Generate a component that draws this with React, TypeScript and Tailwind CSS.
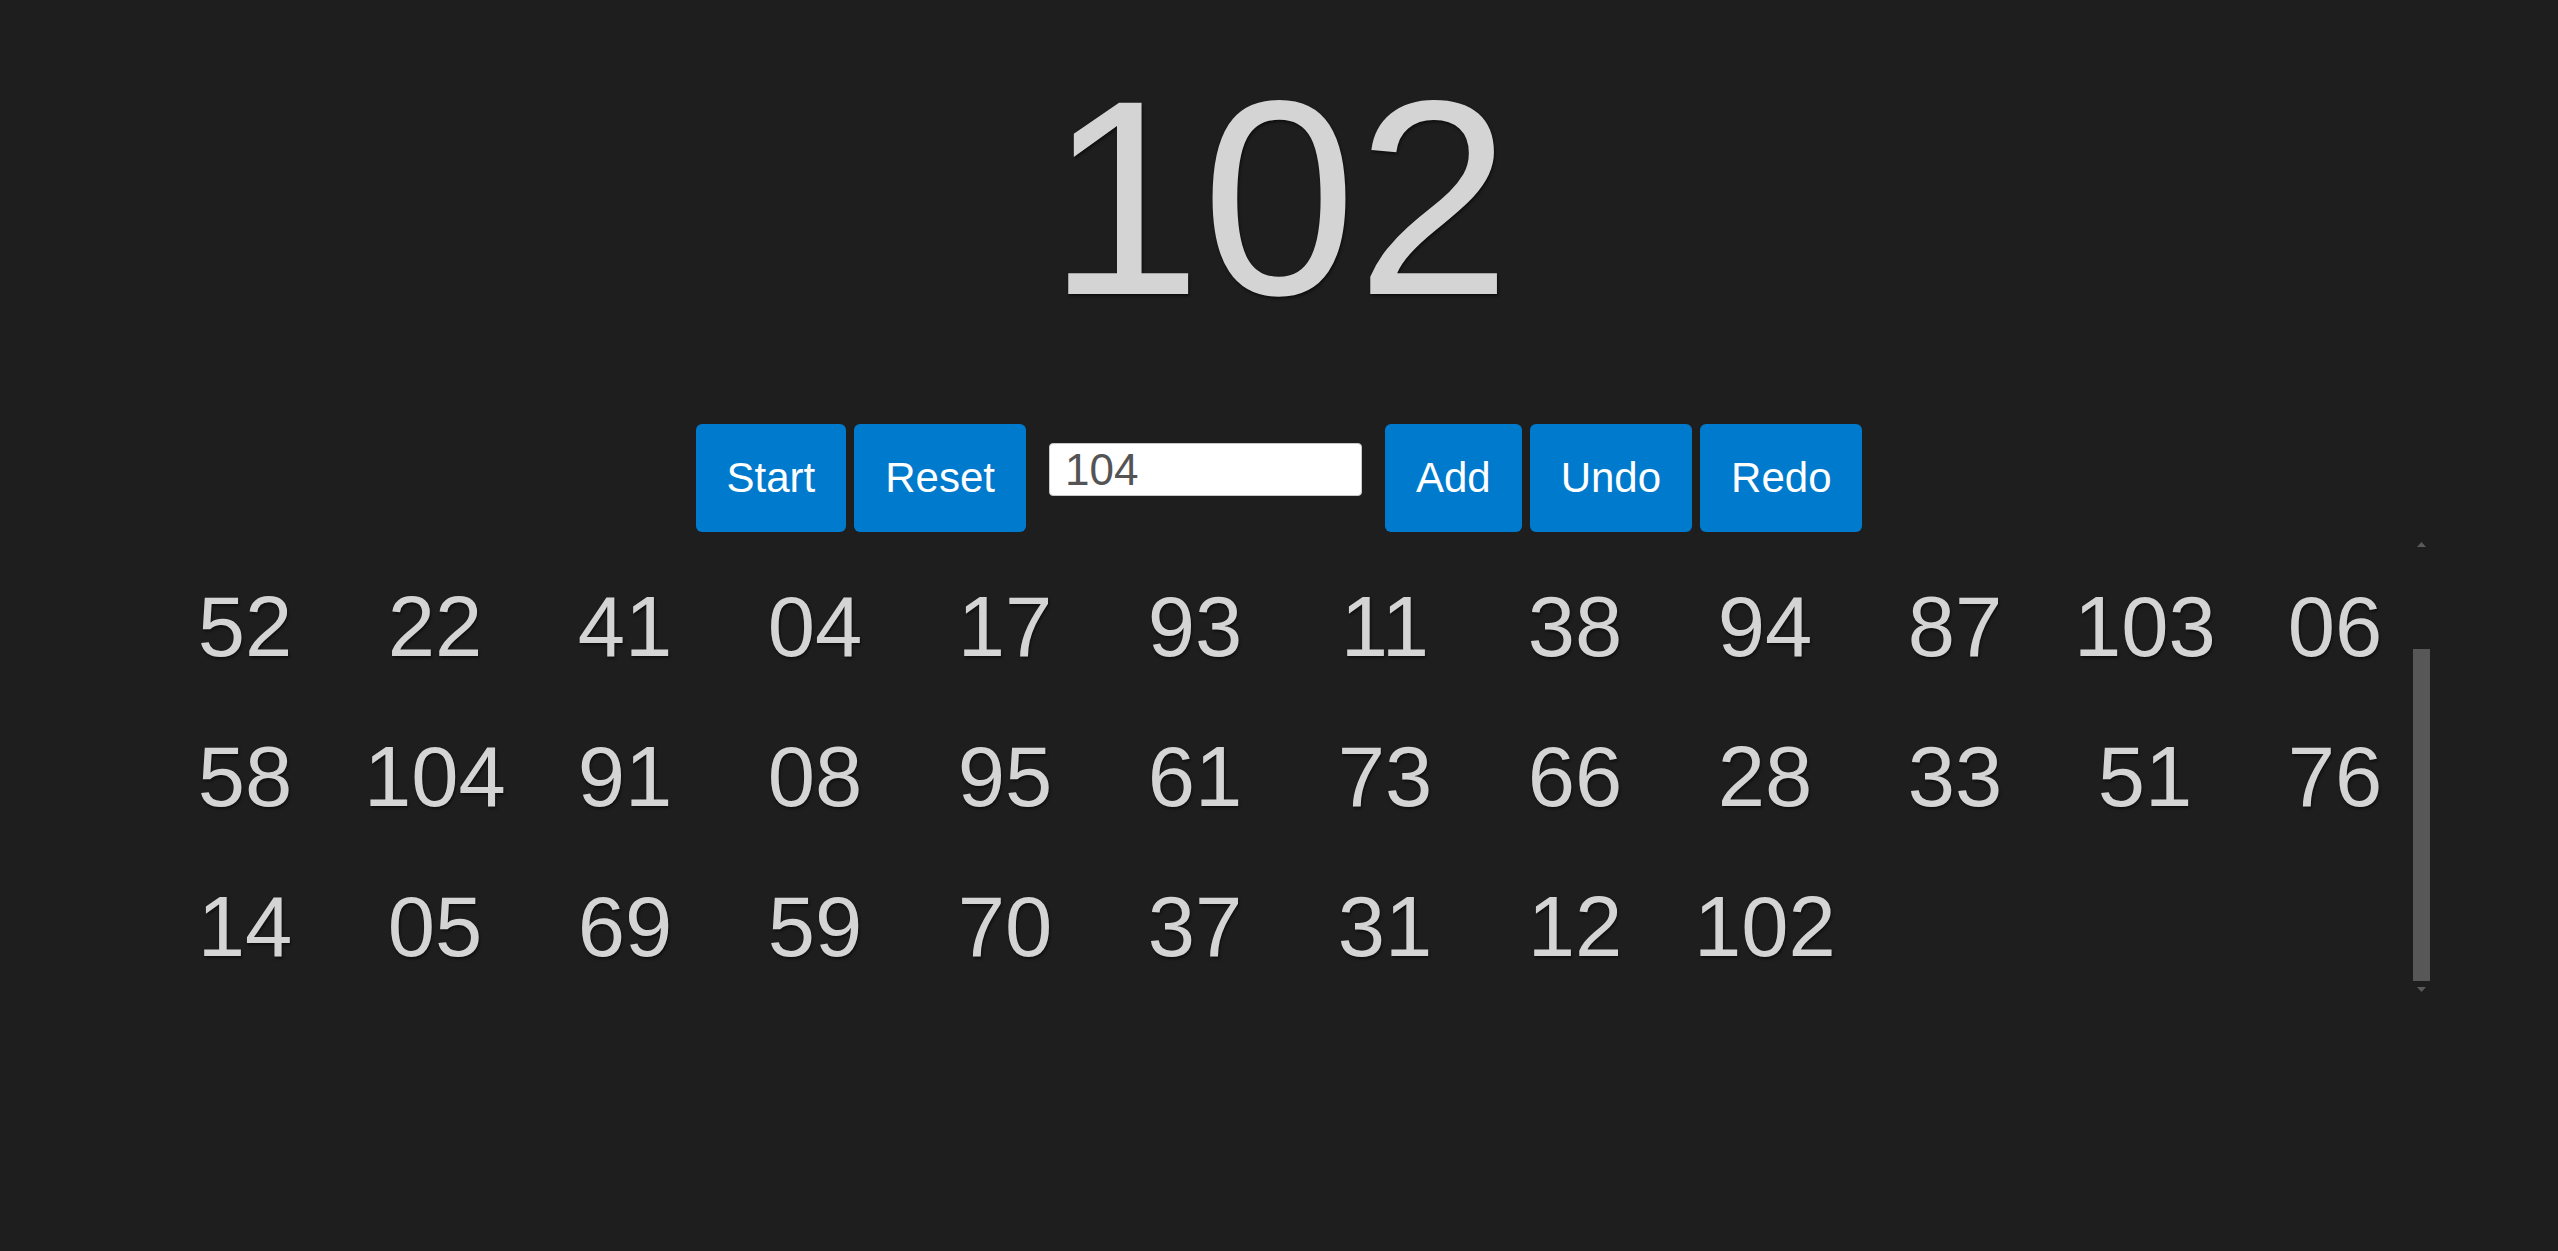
import { useEffect, useRef, useState } from "react";

const initialDrawn = [
  52, 22, 41, 4, 17, 93, 11, 38, 94, 87, 103, 6,
  58, 104, 91, 8, 95, 61, 73, 66, 28, 33, 51, 76,
  14, 5, 69, 59, 70, 37, 31, 12, 102,
];

const MAX = 104;

function pad(n: number) {
  return n < 10 ? `0${n}` : `${n}`;
}

function ActionButton({ label, onClick }: { label: string; onClick?: () => void }) {
  return (
    <button
      onClick={onClick}
      className="rounded-md bg-[#007acc] px-[31px] py-[30px] text-[42px] leading-[1.15] text-white hover:bg-[#0a84d6]"
    >
      {label}
    </button>
  );
}

function ScrollTrack() {
  return (
    <div className="flex h-full w-[17px] flex-col items-center">
      <div className="flex h-[17px] w-full items-center justify-center">
        <svg width="9" height="5" viewBox="0 0 9 5">
          <polygon points="4.5,0 9,5 0,5" fill="#5a5a5a" />
        </svg>
      </div>
      <div className="flex w-full flex-1 flex-col justify-end">
        <div className="h-[332px] w-full bg-[#575757]" />
      </div>
      <div className="flex h-[17px] w-full items-center justify-center">
        <svg width="9" height="5" viewBox="0 0 9 5">
          <polygon points="0,0 9,0 4.5,5" fill="#5a5a5a" />
        </svg>
      </div>
    </div>
  );
}

export default function App() {
  const [drawn, setDrawn] = useState<number[]>(initialDrawn);
  const [redoStack, setRedoStack] = useState<number[]>([]);
  const [input, setInput] = useState("104");
  const listRef = useRef<HTMLDivElement>(null);

  const current = drawn.length ? drawn[drawn.length - 1] : 0;

  useEffect(() => {
    if (listRef.current) {
      listRef.current.scrollTop = listRef.current.scrollHeight;
    }
  }, [drawn]);

  const start = () => {
    const left = [];
    for (let i = 1; i <= MAX; i++) if (!drawn.includes(i)) left.push(i);
    if (!left.length) return;
    const next = left[Math.floor(Math.random() * left.length)];
    setDrawn([...drawn, next]);
    setRedoStack([]);
  };

  const reset = () => {
    setDrawn([]);
    setRedoStack([]);
  };

  const add = () => {
    const n = parseInt(input, 10);
    if (isNaN(n) || drawn.includes(n)) return;
    setDrawn([...drawn, n]);
    setRedoStack([]);
  };

  const undo = () => {
    if (!drawn.length) return;
    setRedoStack([...redoStack, drawn[drawn.length - 1]]);
    setDrawn(drawn.slice(0, -1));
  };

  const redo = () => {
    if (!redoStack.length) return;
    setDrawn([...drawn, redoStack[redoStack.length - 1]]);
    setRedoStack(redoStack.slice(0, -1));
  };

  return (
    <div className="min-h-screen bg-[#1e1e1e] font-['Liberation_Sans',Arial,sans-serif] text-[#d4d4d4]">
      <div className="flex flex-col items-center pt-[59px]">
        <div className="text-[278px] leading-none [text-shadow:1px_2px_3px_rgba(0,0,0,0.55)]">
          {current ? pad(current) : "--"}
        </div>

        <div className="mt-[87px] flex items-start gap-2">
          <ActionButton label="Start" onClick={start} />
          <ActionButton label="Reset" onClick={reset} />
          <input
            value={input}
            onChange={(e) => setInput(e.target.value)}
            className="mx-[15px] mt-[19px] h-[53px] w-[313px] rounded-[4px] border border-[#c8c8c8] bg-white pl-[15px] text-[44px] leading-[1.15] text-[#545454] outline-none"
          />
          <ActionButton label="Add" onClick={add} />
          <ActionButton label="Undo" onClick={undo} />
          <ActionButton label="Redo" onClick={redo} />
        </div>
      </div>

      <div className="mx-auto mt-[4px] flex h-[462px] w-[90%] justify-between pl-[42px]">
        <div
          ref={listRef}
          className="flex h-full flex-col overflow-y-auto [scrollbar-width:none]"
        >
          <div className="mt-auto grid grid-cols-[repeat(12,150px)] gap-x-10">
            {drawn.map((n, i) => (
              <div
                key={i}
                className="h-[150px] pt-[30px] text-center text-[85px] leading-[1.15] [text-shadow:1px_2px_3px_rgba(0,0,0,0.55)]"
              >
                {pad(n)}
              </div>
            ))}
          </div>
        </div>
        <ScrollTrack />
      </div>
    </div>
  );
}
